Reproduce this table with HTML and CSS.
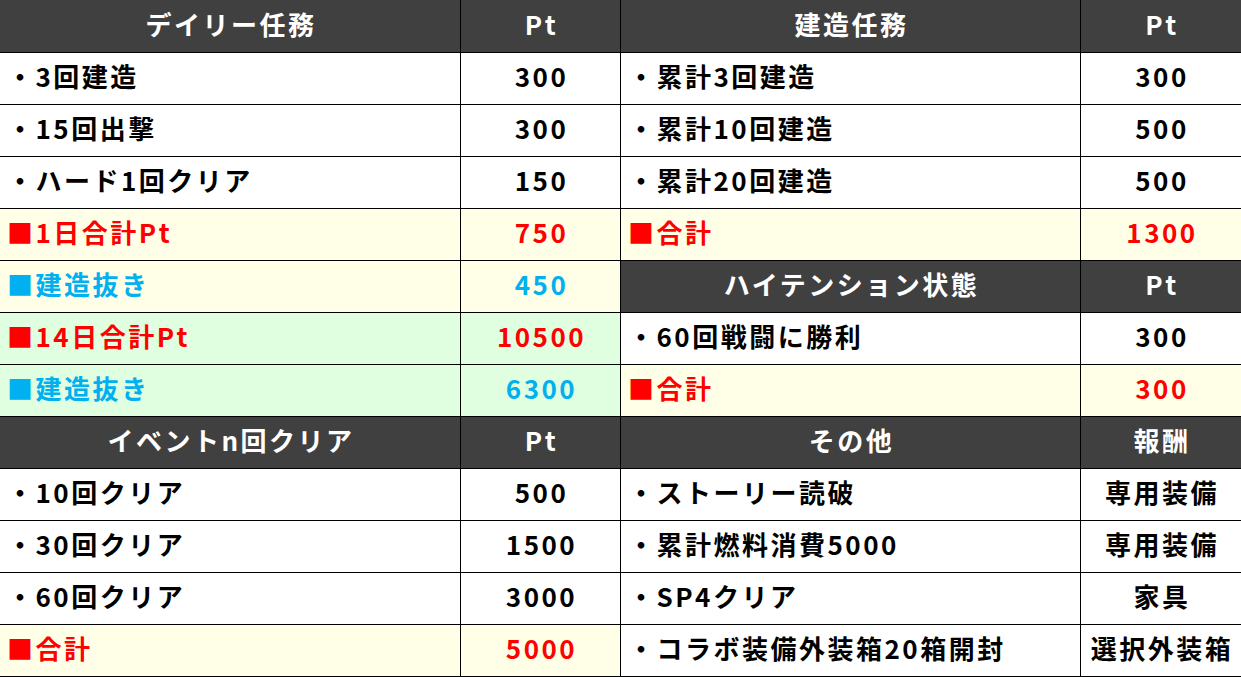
FILE: index.html
```html
<!DOCTYPE html>
<html lang="ja">
<head>
<meta charset="utf-8">
<link rel="stylesheet" href="styles.css">
</head>
<body>
<div class="sheet">
  <div class="c hd">デイリー任務</div><div class="c hd num">Pt</div>
  <div class="c hd">建造任務</div><div class="c hd num">Pt</div>

  <div class="c">・3回建造</div><div class="c num">300</div>
  <div class="c">・累計3回建造</div><div class="c num">300</div>

  <div class="c">・15回出撃</div><div class="c num">300</div>
  <div class="c">・累計10回建造</div><div class="c num">500</div>

  <div class="c">・ハード1回クリア</div><div class="c num">150</div>
  <div class="c">・累計20回建造</div><div class="c num">500</div>

  <div class="c yel red">■1日合計Pt</div><div class="c yel red num">750</div>
  <div class="c yel red">■合計</div><div class="c yel red num">1300</div>

  <div class="c yel blue">■建造抜き</div><div class="c yel blue num">450</div>
  <div class="c hd">ハイテンション状態</div><div class="c hd num">Pt</div>

  <div class="c grn red">■14日合計Pt</div><div class="c grn red num">10500</div>
  <div class="c">・60回戦闘に勝利</div><div class="c num">300</div>

  <div class="c grn blue">■建造抜き</div><div class="c grn blue num">6300</div>
  <div class="c yel red">■合計</div><div class="c yel red num">300</div>

  <div class="c hd">イベントn回クリア</div><div class="c hd num">Pt</div>
  <div class="c hd">その他</div><div class="c hd num">報酬</div>

  <div class="c">・10回クリア</div><div class="c num">500</div>
  <div class="c">・ストーリー読破</div><div class="c num">専用装備</div>

  <div class="c">・30回クリア</div><div class="c num">1500</div>
  <div class="c">・累計燃料消費5000</div><div class="c num">専用装備</div>

  <div class="c">・60回クリア</div><div class="c num">3000</div>
  <div class="c">・SP4クリア</div><div class="c num">家具</div>

  <div class="c yel red">■合計</div><div class="c yel red num">5000</div>
  <div class="c">・コラボ装備外装箱20箱開封</div><div class="c num">選択外装箱</div>
</div>
</body>
</html>
```

FILE: styles.css
```css
html, body {
  margin: 0;
  padding: 0;
  background: #ffffff;
}

.sheet {
  display: grid;
  grid-template-columns: 460px 159px 459px 160px;
  grid-template-rows: 52px repeat(12, 51px);
  gap: 1px;
  padding-bottom: 1px;
  width: 1241px;
  background: #000000;
  font-family: "Noto Sans CJK JP", "Noto Sans", sans-serif;
  font-weight: 700;
  font-size: 26px;
  letter-spacing: 2.5px;
  color: #000000;
}

.c {
  background: #ffffff;
  display: flex;
  align-items: center;
  padding-left: 7px;
  padding-bottom: 5px;
  white-space: nowrap;
  line-height: 1;
}

.num {
  justify-content: center;
  padding-left: 2px;
}

.hd {
  background: #404040;
  color: #ffffff;
  justify-content: center;
  padding-left: 2px;
}

.yel { background: #ffffe8; }
.grn { background: #e0ffe0; }
.red { color: #ff0000; }
.blue { color: #00b0f0; }
```
